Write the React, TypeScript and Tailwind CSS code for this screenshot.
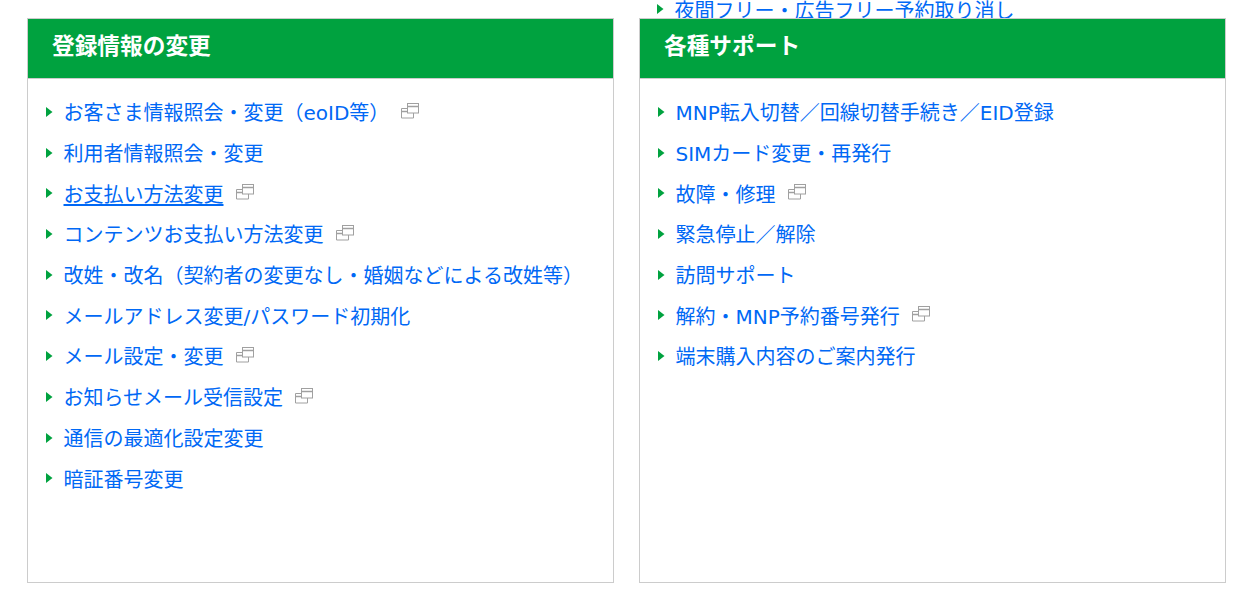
const left: [string, boolean, boolean?][] = [
  ["お客さま情報照会・変更（eoID等）", true],
  ["利用者情報照会・変更", false],
  ["お支払い方法変更", true, true],
  ["コンテンツお支払い方法変更", true],
  ["改姓・改名（契約者の変更なし・婚姻などによる改姓等）", false],
  ["メールアドレス変更/パスワード初期化", false],
  ["メール設定・変更", true],
  ["お知らせメール受信設定", true],
  ["通信の最適化設定変更", false],
  ["暗証番号変更", false],
];
const right: [string, boolean, boolean?][] = [
  ["MNP転入切替／回線切替手続き／EID登録", false],
  ["SIMカード変更・再発行", false],
  ["故障・修理", true],
  ["緊急停止／解除", false],
  ["訪問サポート", false],
  ["解約・MNP予約番号発行", true],
  ["端末購入内容のご案内発行", false],
];

function Arrow({ className }: { className: string }) {
  return (
    <svg width="7" height="10" viewBox="0 0 7 10" className={className}>
      <path d="M0 0 L6.5 5 L0 10 Z" fill="#00a23f" />
    </svg>
  );
}

function WinIcon() {
  return (
    <svg width="18" height="16" viewBox="0 0 18 16" className="ml-[12px] shrink-0 mb-[5px]" fill="none" stroke="#a0a0a0">
      <rect x="6.5" y="0.5" width="11" height="9.5" fill="#fff" />
      <path d="M6.5 3.5H17.5" strokeWidth="1.5" />
      <path d="M6.5 5.5H0.5V15H12.5V10" />
      <path d="M0.5 8.5H6.5" strokeWidth="1.5" />
    </svg>
  );
}

function Row({ text, icon, underline }: { text: string; icon: boolean; underline?: boolean }) {
  return (
    <li className="relative pl-[17.5px] h-[40.7px] flex items-center text-[20px] leading-[30px] text-[#0068f5]">
      <Arrow className="absolute left-0 top-[14px]" />
      <a className={underline ? "underline decoration-2 underline-offset-2" : ""}>{text}</a>
      {icon && <WinIcon />}
    </li>
  );
}

function Panel({ title, items, top }: { title: string; items: [string, boolean, boolean?][]; top?: string }) {
  return (
    <div className="flex flex-col w-[587px]">
      <div className="h-[18px] overflow-hidden relative">
        {top && (
          <div className="absolute left-[18px] top-[-4px] pl-[17.5px] text-[20px] leading-[30px] text-[#0068f5] whitespace-nowrap">
            <Arrow className="absolute left-0 top-[8px]" />
            {top}
          </div>
        )}
      </div>
      <div className="h-[565px] border border-[#cccccc] bg-white">
        <h2 className="h-[60px] bg-[#00a23f] text-white text-[22.7px] font-bold pl-6 flex items-center pb-[5px] border-b border-[#cccccc]">{title}</h2>
        <ul className="pt-[14px] pl-[18px]">
          {items.map(([t, i, u]) => (
            <Row key={t} text={t} icon={i} underline={u} />
          ))}
        </ul>
      </div>
    </div>
  );
}

export default function App() {
  return (
    <div className="w-[1243px] h-[605px] overflow-hidden bg-white flex gap-[25px] pl-[27px] font-['DejaVu_Sans','Noto_Sans_CJK_JP',sans-serif]">
      <Panel title="登録情報の変更" items={left} />
      <Panel title="各種サポート" items={right} top="夜間フリー・広告フリー予約取り消し" />
    </div>
  );
}
